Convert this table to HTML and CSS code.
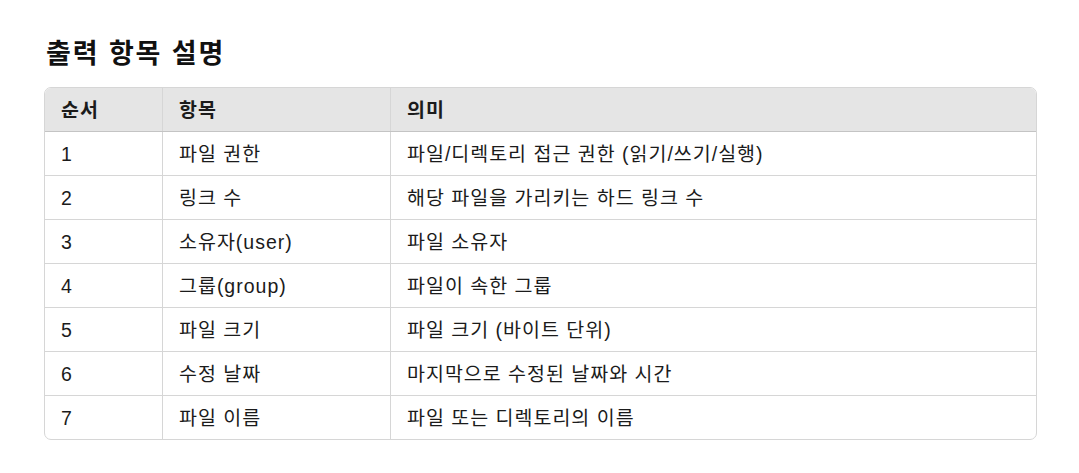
FILE: index.html
```html
<!DOCTYPE html>
<html lang="ko">
<head>
<meta charset="utf-8">
<link rel="stylesheet" href="styles.css">
</head>
<body>
<main class="page">
  <h2 class="title">출력 항목 설명</h2>
  <div class="table-wrap">
    <table class="info">
      <thead>
        <tr><th class="c1">순서</th><th class="c2">항목</th><th class="c3">의미</th></tr>
      </thead>
      <tbody>
        <tr><td>1</td><td>파일 권한</td><td>파일/디렉토리 접근 권한 (읽기/쓰기/실행)</td></tr>
        <tr><td>2</td><td>링크 수</td><td>해당 파일을 가리키는 하드 링크 수</td></tr>
        <tr><td>3</td><td>소유자(user)</td><td>파일 소유자</td></tr>
        <tr><td>4</td><td>그룹(group)</td><td>파일이 속한 그룹</td></tr>
        <tr><td>5</td><td>파일 크기</td><td>파일 크기 (바이트 단위)</td></tr>
        <tr><td>6</td><td>수정 날짜</td><td>마지막으로 수정된 날짜와 시간</td></tr>
        <tr><td>7</td><td>파일 이름</td><td>파일 또는 디렉토리의 이름</td></tr>
      </tbody>
    </table>
  </div>
</main>
</body>
</html>
```
FILE: styles.css
```css
html, body {
  margin: 0;
  padding: 0;
  background: #ffffff;
}
body {
  font-family: "Liberation Sans", "Noto Sans CJK KR", sans-serif;
  color: #1b1b1b;
}
.page {
  padding: 35px 42px 0 44px;
}
.title {
  margin: 0 0 14px 2px;
  font-size: 27px;
  letter-spacing: 1.9px;
  font-weight: 700;
  line-height: 38px;
  color: #111;
}
.table-wrap {
  border: 1px solid #d6d6d6;
  border-radius: 7px;
  overflow: hidden;
}
.info {
  width: 100%;
  border-collapse: collapse;
  table-layout: fixed;
  font-size: 19.5px;
  letter-spacing: 1px;
}
.info th, .info td {
  height: 43px;
  padding: 0 16px;
  text-align: left;
  vertical-align: middle;
  border-left: 1px solid #d6d6d6;
  border-top: 1px solid #d6d6d6;
  line-height: 22px;
}
.info th:first-child, .info td:first-child { border-left: none; }
.info thead th {
  border-top: none;
  background: #e5e5e5;
  font-weight: 700;
  border-bottom: 1px solid #c4c4c4;
  height: 43px;
}
.info tbody tr:first-child td { border-top: none; }
.c1 { width: 85px; }
.c2 { width: 195px; }
.info td { font-weight: 400; }
```
